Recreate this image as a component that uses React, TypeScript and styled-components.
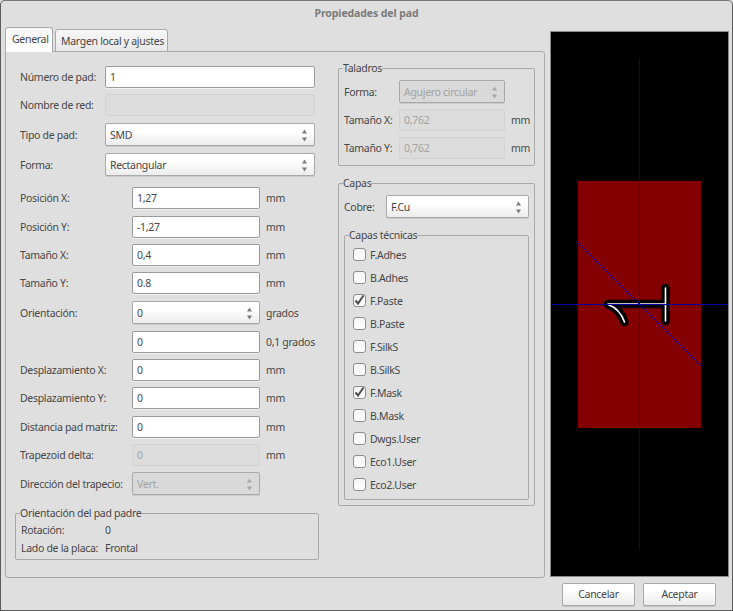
import React from 'react'
import styled, { createGlobalStyle, css } from 'styled-components'

const FONT = '"Noto Sans", "Liberation Sans", sans-serif'
const TEXT = '#474747'
const MUTED = '#a3a3a3'
const LINE = '#a9a9a9'

const Global = createGlobalStyle`
  html, body { margin: 0; padding: 0; background: #dfdfdf; }
  * { box-sizing: border-box; }
`

const Dialog = styled.div`
  width: 733px;
  height: 611px;
  background: #dfdfdf;
  border: 1px solid #5c5c5c;
  border-top-color: #777;
  border-radius: 5px 5px 0 0;
  font-family: ${FONT};
  font-size: 10.5px;
  letter-spacing: -0.3px;
  color: ${TEXT};
  overflow: hidden;
  white-space: nowrap;
`

const Title = styled.div`
  height: 26px;
  line-height: 24px;
  text-align: center;
  font-weight: 700;
  font-size: 10.5px;
  letter-spacing: -0.1px;
  color: #7b7b7b;
`

const Body = styled.div`
  display: flex;
  gap: 5px;
  padding: 0 3px 0 4px;
`

const Notebook = styled.div`
  flex: none;
  width: 540px;
  height: 551px;
  display: flex;
  flex-direction: column;
`

const Tabs = styled.div`
  display: flex;
  align-items: flex-end;
  gap: 2px;
  height: 25px;
  margin-bottom: -1px;
  position: relative;
`

const Tab = styled.div<{ $active?: boolean }>`
  border: 1px solid ${LINE};
  border-radius: 3px 3px 0 0;
  padding: 0 5px;
  ${(p) =>
    p.$active
      ? css`
          width: 48px;
          height: 25px;
          line-height: 22px;
          padding-left: 6px;
          background: linear-gradient(#f6f6f6, #fff);
          border-bottom: 0;
        `
      : css`
          width: 113px;
          height: 23px;
          line-height: 22px;
          background: linear-gradient(#f7f7f7, #e9e9e9);
        `}
`

const Pane = styled.div`
  flex: 1;
  display: flex;
  gap: 19px;
  padding: 9px 0 0 9px;
  border: 1px solid ${LINE};
  border-radius: 0 3px 3px 3px;
`

const LeftColumn = styled.div`
  width: 304px;
  padding-top: 5px;
`

const RightColumn = styled.div`
  width: 197px;
  display: flex;
  flex-direction: column;
  gap: 10px;
`

const Row = styled.div<{ $label: number; $top: number; $height?: number; $flush?: boolean }>`
  display: grid;
  grid-template-columns: ${(p) => p.$label}px 1fr;
  align-items: center;
  height: ${(p) => p.$height ?? 22}px;
  margin-top: ${(p) => p.$top}px;
  padding: ${(p) => (p.$flush ? '0' : '0 4px 0 5px')};
`

const Field = styled.div`
  display: flex;
  align-items: center;
`

const Unit = styled.span`
  margin-left: 6px;
`

const Input = styled.input<{ $width?: number; $height?: number }>`
  width: ${(p) => (p.$width ? `${p.$width}px` : '100%')};
  height: ${(p) => p.$height ?? 22}px;
  padding: 0 4px;
  border: 1px solid #9a9a9a;
  border-radius: 2px;
  background: #fff;
  box-shadow: 0 1px 0 #f0f0f0;
  font: inherit;
  letter-spacing: inherit;
  color: ${TEXT};
  outline: none;

  &:disabled {
    background: #dcdcdc;
    border-color: #d2d2d2;
    color: ${MUTED};
    box-shadow: none;
  }
`

const ComboBox = styled.div<{ $width?: number; $disabled?: boolean }>`
  width: ${(p) => (p.$width ? `${p.$width}px` : '100%')};
  height: 23px;
  display: flex;
  align-items: center;
  justify-content: space-between;
  padding: 0 6px 0 4px;
  border: 1px solid ${LINE};
  border-radius: 2px;
  box-shadow: 0 1px 0 #c9c9c9;
  ${(p) =>
    p.$disabled
      ? css`
          background: #d9d9d9;
          color: ${MUTED};
        `
      : css`
          background: linear-gradient(#fff 35%, #ececec);
        `}
`

const Group = styled.fieldset<{ $height: number; $top?: number }>`
  height: ${(p) => p.$height}px;
  min-width: 0;
  margin: ${(p) => p.$top ?? 0}px 0 0;
  padding: 0 5px;
  border: 1px solid ${LINE};
  border-radius: 2px;
`

const Legend = styled.legend`
  margin-left: -1px;
  padding: 0;
  height: 14px;
  line-height: 14px;
`

const InfoRow = styled.div<{ $top: number }>`
  display: grid;
  grid-template-columns: 84px 1fr;
  height: 16px;
  line-height: 16px;
  margin-top: ${(p) => p.$top}px;
`

const CheckList = styled.div`
  display: flex;
  flex-direction: column;
  padding: 1px 0 0 3px;
`

const CheckRow = styled.label`
  display: flex;
  align-items: center;
  gap: 4px;
  height: 23px;
`

const CheckBox = styled.span`
  width: 13px;
  height: 13px;
  display: flex;
  border: 1px solid #8e8e8e;
  border-radius: 3px;
  background: linear-gradient(#f4f4f4, #fff);

  svg {
    overflow: visible;
  }
`

const Canvas = styled.div`
  flex: none;
  width: 179px;
  height: 546px;
  margin-top: 4px;
  border: 1px solid #8a8a8a;
  background: #000;

  svg {
    display: block;
  }
`

const Footer = styled.div`
  display: flex;
  justify-content: flex-end;
  gap: 8px;
  padding: 5px 16px 0 0;
`

const Button = styled.div`
  width: 73px;
  height: 23px;
  line-height: 21px;
  text-align: center;
  border: 1px solid ${LINE};
  border-radius: 2px;
  background: linear-gradient(#fff 30%, #ebebeb);
  box-shadow: 0 1px 0 #c4c4c4;
`

function Arrows({ muted }: { muted?: boolean }) {
  const fill = muted ? '#a6a6a6' : '#7a7a7a'
  return (
    <svg width="7" height="14" viewBox="0 0 7 14">
      <path d="M3.5 1.5 L6 5.5 H1 Z" fill={fill} />
      <path d="M1 9.5 H6 L3.5 13.5 Z" fill={fill} />
    </svg>
  )
}

function Combo({ value, width, disabled }: { value: string; width?: number; disabled?: boolean }) {
  return (
    <ComboBox $width={width} $disabled={disabled}>
      <span>{value}</span>
      <Arrows muted={disabled} />
    </ComboBox>
  )
}

const measures = [
  { label: 'Posición X:', value: '1,27', top: 11 },
  { label: 'Posición Y:', value: '-1,27', top: 7 },
  { label: 'Tamaño X:', value: '0,4', top: 6 },
  { label: 'Tamaño Y:', value: '0.8', top: 6 },
]

const offsets = [
  { label: 'Desplazamiento X:', top: 6 },
  { label: 'Desplazamiento Y:', top: 6 },
  { label: 'Distancia pad matriz:', top: 7 },
]

const layers = [
  { name: 'F.Adhes' },
  { name: 'B.Adhes' },
  { name: 'F.Paste', checked: true },
  { name: 'B.Paste' },
  { name: 'F.SilkS' },
  { name: 'B.SilkS' },
  { name: 'F.Mask', checked: true },
  { name: 'B.Mask' },
  { name: 'Dwgs.User' },
  { name: 'Eco1.User' },
  { name: 'Eco2.User' },
]

const GLYPH = 'M608 304 H665.5 M665.5 288 V321 M608 304.5 C615 307 621 312 624.5 322'

function PadPreview() {
  return (
    <svg width="177" height="544" viewBox="551 32 177 544">
      <rect x="578" y="181" width="123" height="247" fill="#840000" />
      <g fill="none" strokeLinecap="round" strokeLinejoin="round">
        <path d={GLYPH} stroke="#000" strokeWidth="8.5" />
        <path d={GLYPH} stroke="#fff" strokeWidth="1.6" />
      </g>
      <g stroke="#0000a0" fill="none" shapeRendering="crispEdges">
        <path d="M578 243 L701 366" />
        <path d="M639.5 59 V550 M551 304.5 H728" />
      </g>
    </svg>
  )
}

export default function App() {
  return (
    <>
      <Global />
      <Dialog>
        <Title>Propiedades del pad</Title>
        <Body>
          <Notebook>
            <Tabs>
              <Tab $active>General</Tab>
              <Tab>Margen local y ajustes</Tab>
            </Tabs>
            <Pane>
              <LeftColumn>
                <Row $label={85} $top={0}>
                  <span>Número de pad:</span>
                  <Input defaultValue="1" />
                </Row>
                <Row $label={85} $top={6}>
                  <span>Nombre de red:</span>
                  <Input disabled />
                </Row>
                <Row $label={85} $top={7} $height={23}>
                  <span>Tipo de pad:</span>
                  <Combo value="SMD" />
                </Row>
                <Row $label={85} $top={7} $height={23}>
                  <span>Forma:</span>
                  <Combo value="Rectangular" />
                </Row>
                {measures.map((m) => (
                  <Row key={m.label} $label={112} $top={m.top}>
                    <span>{m.label}</span>
                    <Field>
                      <Input $width={128} defaultValue={m.value} />
                      <Unit>mm</Unit>
                    </Field>
                  </Row>
                ))}
                <Row $label={112} $top={7} $height={23}>
                  <span>Orientación:</span>
                  <Field>
                    <Combo value="0" width={128} />
                    <Unit>grados</Unit>
                  </Field>
                </Row>
                <Row $label={112} $top={7}>
                  <span />
                  <Field>
                    <Input $width={128} defaultValue="0" />
                    <Unit>0,1 grados</Unit>
                  </Field>
                </Row>
                {offsets.map((o) => (
                  <Row key={o.label} $label={112} $top={o.top}>
                    <span>{o.label}</span>
                    <Field>
                      <Input $width={128} defaultValue="0" />
                      <Unit>mm</Unit>
                    </Field>
                  </Row>
                ))}
                <Row $label={112} $top={6}>
                  <span>Trapezoid delta:</span>
                  <Field>
                    <Input $width={128} defaultValue="0" disabled />
                    <Unit>mm</Unit>
                  </Field>
                </Row>
                <Row $label={112} $top={6} $height={23}>
                  <span>Dirección del trapecio:</span>
                  <Combo value="Vert." width={128} disabled />
                </Row>
                <Group $height={54} $top={11}>
                  <Legend>Orientación del pad padre</Legend>
                  <InfoRow $top={2}>
                    <span>Rotación:</span>
                    <span>0</span>
                  </InfoRow>
                  <InfoRow $top={2}>
                    <span>Lado de la placa:</span>
                    <span>Frontal</span>
                  </InfoRow>
                </Group>
              </LeftColumn>
              <RightColumn>
                <Group $height={105}>
                  <Legend>Taladros</Legend>
                  <Row $label={55} $top={5} $height={23} $flush>
                    <span>Forma:</span>
                    <Combo value="Agujero circular" width={106} disabled />
                  </Row>
                  <Row $label={55} $top={6} $flush>
                    <span>Tamaño X:</span>
                    <Field>
                      <Input $width={106} defaultValue="0,762" disabled />
                      <Unit>mm</Unit>
                    </Field>
                  </Row>
                  <Row $label={55} $top={6} $flush>
                    <span>Tamaño Y:</span>
                    <Field>
                      <Input $width={106} defaultValue="0,762" disabled />
                      <Unit>mm</Unit>
                    </Field>
                  </Row>
                </Group>
                <Group $height={330}>
                  <Legend>Capas</Legend>
                  <Row $label={42} $top={5} $height={23} $flush>
                    <span>Cobre:</span>
                    <Combo value="F.Cu" />
                  </Row>
                  <Group $height={272} $top={10}>
                    <Legend>Capas técnicas</Legend>
                    <CheckList>
                      {layers.map((l) => (
                        <CheckRow key={l.name}>
                          <CheckBox>
                            {l.checked && (
                              <svg width="11" height="11" viewBox="0 0 11 11">
                                <path d="M1.5 5.5 L4 8.5 L9.5 0.5" fill="none" stroke="#4d4d4d" strokeWidth="2" />
                              </svg>
                            )}
                          </CheckBox>
                          {l.name}
                        </CheckRow>
                      ))}
                    </CheckList>
                  </Group>
                </Group>
              </RightColumn>
            </Pane>
          </Notebook>
          <Canvas>
            <PadPreview />
          </Canvas>
        </Body>
        <Footer>
          <Button>Cancelar</Button>
          <Button>Aceptar</Button>
        </Footer>
      </Dialog>
    </>
  )
}
